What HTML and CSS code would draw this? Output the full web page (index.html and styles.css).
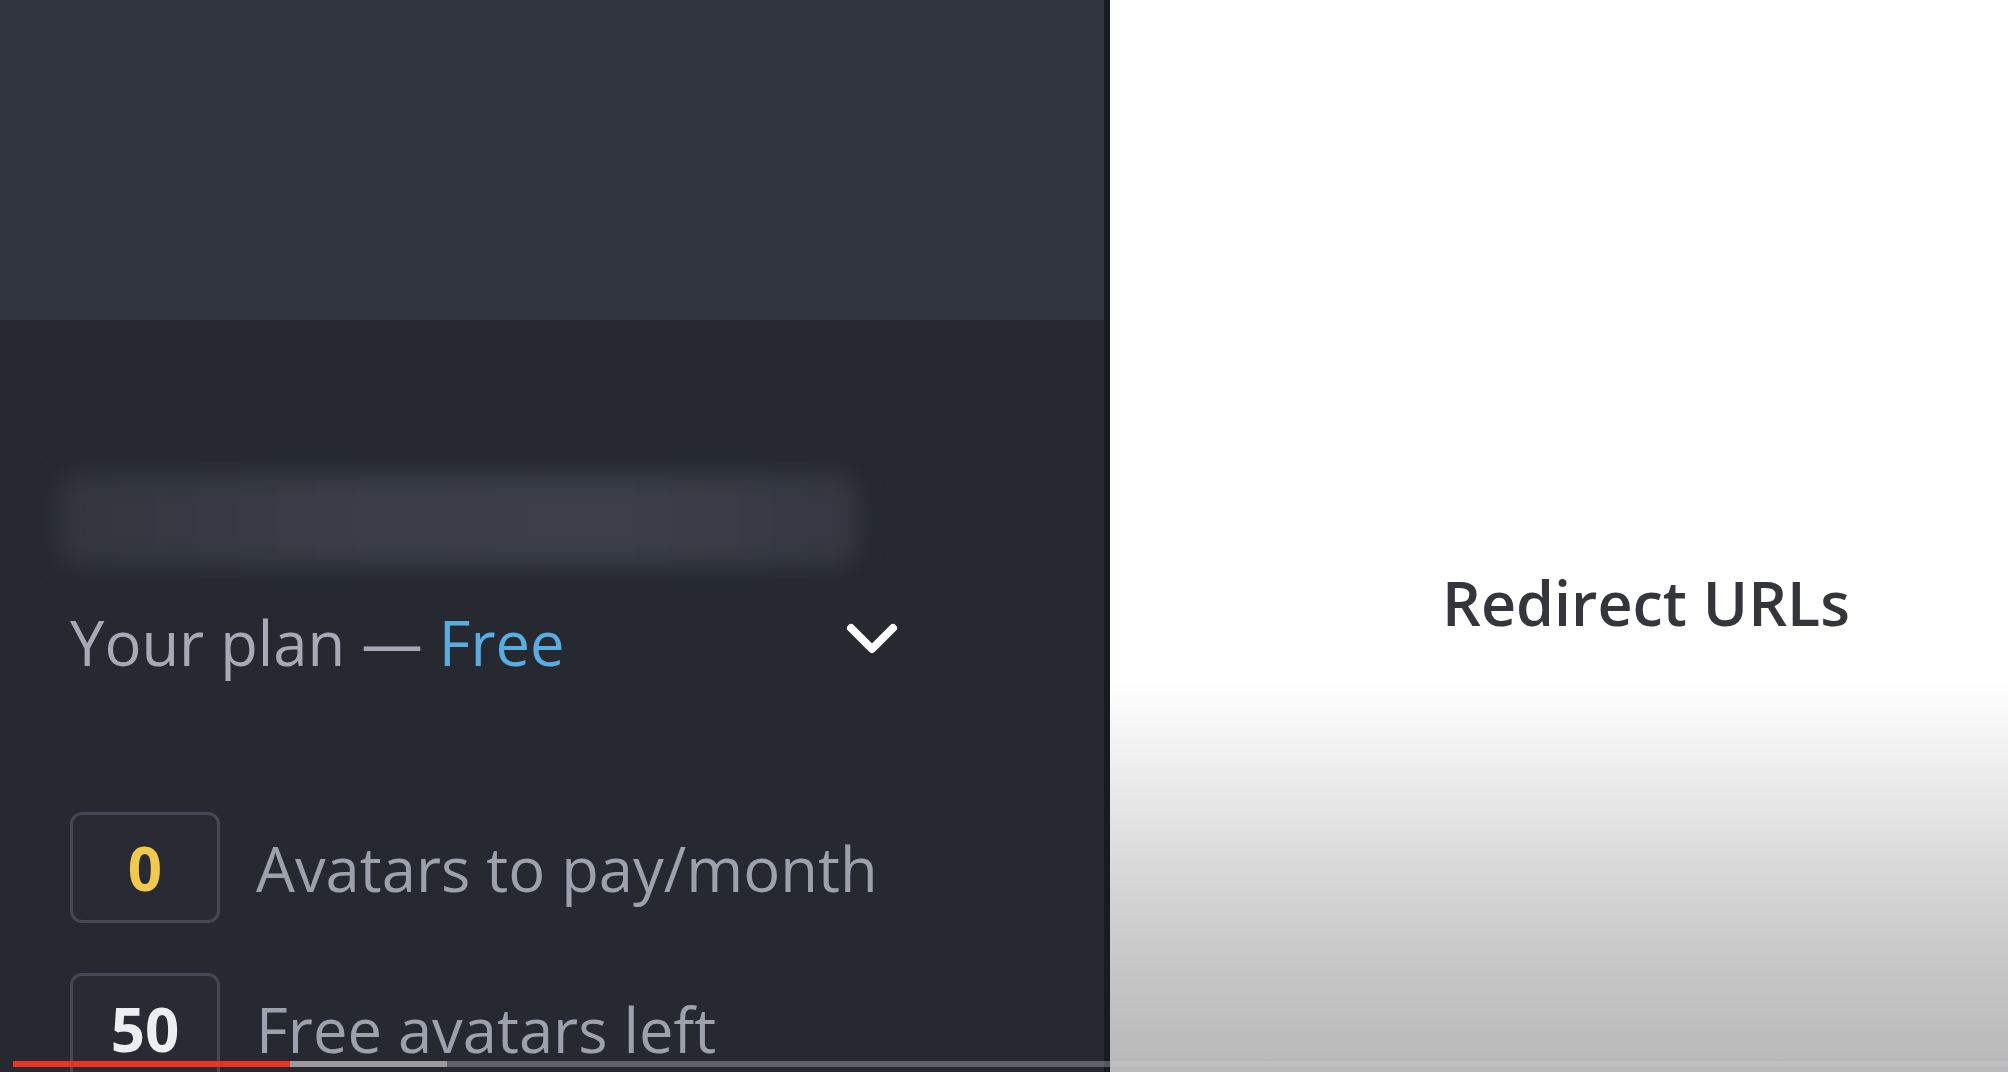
FILE: index.html
```html
<!DOCTYPE html>
<html lang="en">
<head>
<meta charset="utf-8">
<title>Your plan</title>
<link rel="stylesheet" href="styles.css">
</head>
<body>
<div class="screen">
  <aside class="sidebar">
    <div class="sidebar-top"></div>
    <div class="sidebar-body">
      <div class="blurred-name"></div>
      <div class="plan-row">
        <span class="plan-label">Your plan — <span class="plan-name">Free</span></span>
        <svg class="chevron" width="52" height="32" viewBox="0 0 52 32" aria-hidden="true">
          <polyline points="5,5 26,26 47,5" fill="none" stroke="#ffffff" stroke-width="8" stroke-linecap="round" stroke-linejoin="round"/>
        </svg>
      </div>
      <div class="stats">
        <div class="stat">
          <div class="stat-box stat-box--gold">0</div>
          <div class="stat-label">Avatars to pay/month</div>
        </div>
        <div class="stat">
          <div class="stat-box">50</div>
          <div class="stat-label">Free avatars left</div>
        </div>
      </div>
    </div>
  </aside>
  <main class="content">
    <h2 class="content-title">Redirect URLs</h2>
  </main>
  <div class="progress">
    <div class="progress-played"></div>
    <div class="progress-loaded"></div>
  </div>
</div>
</body>
</html>
```
FILE: styles.css
```css
* { box-sizing: border-box; }
html, body {
  margin: 0;
  padding: 0;
  width: 2008px;
  height: 1072px;
  overflow: hidden;
  background: #262930;
  font-family: "Open Sans", "Noto Sans", sans-serif;
}
.screen {
  position: relative;
  display: flex;
  width: 2008px;
  height: 1072px;
}
.sidebar {
  width: 1110px;
  flex: none;
  display: flex;
  flex-direction: column;
  background: #262930;
  border-right: 6px solid #181b21;
}
.sidebar-top {
  height: 320px;
  background: #303540;
  flex: none;
}
.sidebar-body {
  flex: 1;
  padding: 154px 0 0 70px;
  display: flex;
  flex-direction: column;
}
.blurred-name {
  margin-left: -12px;
  width: 800px;
  height: 92px;
  background: linear-gradient(90deg, #33363f 0%, #3b3e49 40%, #3c3f4a 70%, #353842 100%);
  filter: blur(12px);
  border-radius: 20px;
}
.plan-row {
  margin-top: 39px;
  width: 830px;
  display: flex;
  align-items: center;
  justify-content: space-between;
  height: 74px;
}
.plan-label {
  font-size: 61.5px;
  line-height: 74px;
  color: #a7aab5;
  white-space: nowrap;
}
.plan-name { color: #58aee2; }
.chevron { margin-top: -6px; margin-right: 2px; }
.stats {
  margin-top: 133px;
  display: flex;
  flex-direction: column;
  gap: 50px;
}
.stat {
  display: flex;
  align-items: center;
  gap: 36px;
}
.stat-box {
  width: 150px;
  height: 111px;
  flex: none;
  border: 3px solid #454853;
  border-radius: 12px;
  display: flex;
  align-items: center;
  justify-content: center;
  font-size: 60px;
  font-weight: 700;
  color: #eceef2;
  background: #282b33;
}
.stat-box--gold { color: #f2c94c; }
.stat-label {
  font-size: 61.5px;
  line-height: 74px;
  color: #9da1ac;
  white-space: nowrap;
}
.content {
  flex: 1;
  background: linear-gradient(180deg, #ffffff 0px, #ffffff 680px, #efefef 760px, #d6d6d6 880px, #c4c4c4 980px, #b8b8b8 1072px);
  padding: 566px 0 0 332px;
}
.content-title {
  margin: 0;
  font-size: 61px;
  line-height: 74px;
  font-weight: 600;
  color: #34363b;
  white-space: nowrap;
}
.progress {
  position: absolute;
  left: 13px;
  right: 0;
  bottom: 5px;
  height: 6px;
  background: rgba(200, 200, 205, 0.35);
}
.progress-played {
  position: absolute;
  left: 0;
  top: 0;
  height: 6px;
  width: 277px;
  background: #ec3323;
  z-index: 2;
}
.progress-loaded {
  position: absolute;
  left: 0;
  top: 0;
  height: 6px;
  width: 434px;
  background: #9c9c9f;
}
```
